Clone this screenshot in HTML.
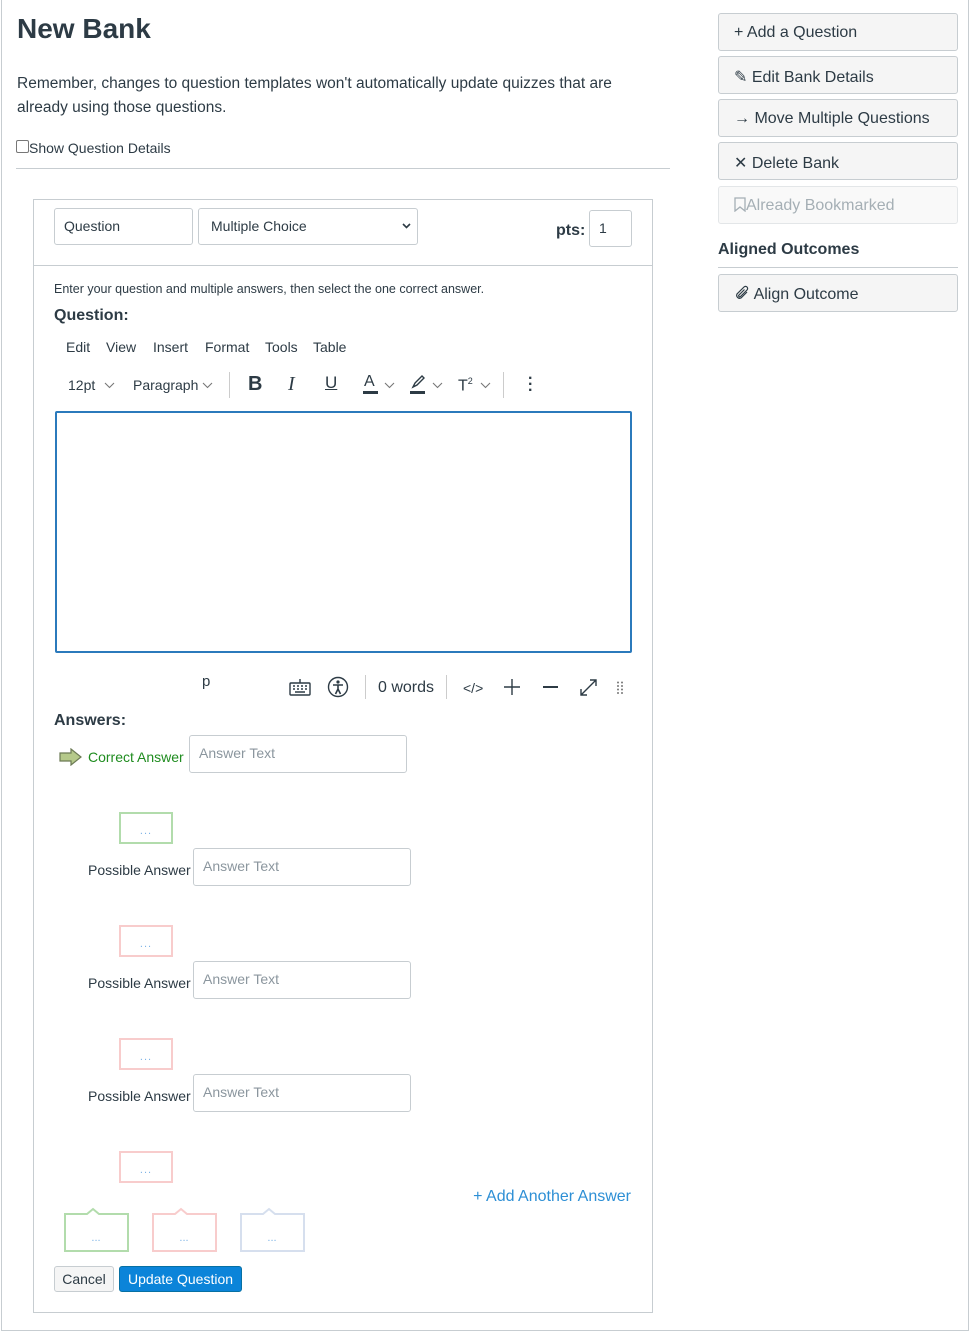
<!DOCTYPE html>
<html><head><meta charset="utf-8"><style>
*{box-sizing:border-box}
body{margin:0;width:971px;height:1333px;background:#fff;font-family:"Liberation Sans",sans-serif;color:#2d3b45;position:relative;overflow:hidden}
.a{position:absolute;white-space:nowrap}
.frame{position:absolute;left:1px;top:0;width:968px;height:1331px;border:1px solid #c7cdd1;border-top:none}
.btn{position:absolute;left:718px;width:240px;height:38px;background:#f5f5f5;border:1px solid #c7cdd1;border-radius:3px;font-size:16px;padding:10px 0 0 15px;color:#2d3b45}
.inp{position:absolute;border:1px solid #c7cdd1;border-radius:3px;background:#fff;font-size:14px;padding:9px 9px;color:#2d3b45}
.ph{color:#8b969e}
.cb{position:absolute;width:54px;height:32px;border:2px solid;font-size:11px;color:#7fb4e6;text-align:center;line-height:34px;letter-spacing:1px}
.ic{stroke:#2d3b45;fill:none;stroke-width:1.4}
.chev{position:absolute}
</style></head><body>
<div class="frame"></div>
<div class="a" style="left:17px;top:13px;font-size:28px;font-weight:bold;color:#2d3b45">New Bank</div>
<div class="a" style="left:17px;top:72px;font-size:15.5px;line-height:24px;white-space:normal;width:640px">Remember, changes to question templates won't automatically update quizzes that are already using those questions.</div>
<div class="a" style="left:16px;top:140px;width:13px;height:13px;border:1px solid #777;border-radius:2px;background:#fff"></div>
<div class="a" style="left:29px;top:140px;font-size:14px">Show Question Details</div>
<div class="a" style="left:16px;top:168px;width:654px;height:1px;background:#c7cdd1"></div>

<!-- question box -->
<div class="a" style="left:33px;top:199px;width:620px;height:1114px;border:1px solid #c7cdd1"></div>
<div class="a" style="left:34px;top:200px;width:618px;height:66px;background:#fff;border-bottom:1px solid #c7cdd1"></div>
<div class="inp" style="left:54px;top:208px;width:139px;height:37px">Question</div>
<div class="inp" style="left:198px;top:208px;width:220px;height:37px;padding-left:12px">Multiple Choice
<svg style="position:absolute;right:6px;top:14px" width="9" height="6"><path d="M1 1l3.5 3.5L8 1" stroke="#2d3b45" stroke-width="1.6" fill="none"/></svg></div>
<div class="a" style="left:556px;top:222px;font-size:16px;font-weight:bold">pts:</div>
<div class="inp" style="left:589px;top:210px;width:43px;height:37px">1</div>

<div class="a" style="left:54px;top:282px;font-size:12.5px">Enter your question and multiple answers, then select the one correct answer.</div>
<div class="a" style="left:54px;top:307px;font-size:16px;font-weight:bold">Question:</div>
<div class="a" style="left:66px;top:339px;font-size:14px">Edit</div>
<div class="a" style="left:106px;top:339px;font-size:14px">View</div>
<div class="a" style="left:153px;top:339px;font-size:14px">Insert</div>
<div class="a" style="left:205px;top:339px;font-size:14px">Format</div>
<div class="a" style="left:265px;top:339px;font-size:14px">Tools</div>
<div class="a" style="left:313px;top:339px;font-size:14px">Table</div>

<div class="a" style="left:68px;top:377px;font-size:14px">12pt</div>
<svg class="chev" style="left:104px;top:382px" width="11" height="7"><path d="M1 1l4.5 4.5L10 1" stroke="#777" stroke-width="1.1" fill="none"/></svg>
<div class="a" style="left:133px;top:377px;font-size:14px">Paragraph</div>
<svg class="chev" style="left:202px;top:382px" width="11" height="7"><path d="M1 1l4.5 4.5L10 1" stroke="#777" stroke-width="1.1" fill="none"/></svg>
<div class="a" style="left:229px;top:372px;width:1px;height:26px;background:#ccc"></div>
<div class="a" style="left:248px;top:373px;font-size:20px;font-weight:bold">B</div>
<div class="a" style="left:288px;top:373px;font-size:20px;font-style:italic;font-family:'Liberation Serif',serif">I</div>
<div class="a" style="left:325px;top:373px;font-size:17px;text-decoration:underline">U</div>
<div class="a" style="left:364px;top:373px;font-size:16px">A</div>
<div class="a" style="left:363px;top:391px;width:15px;height:3px;background:#2d3b45"></div>
<svg class="chev" style="left:384px;top:382px" width="11" height="7"><path d="M1 1l4.5 4.5L10 1" stroke="#777" stroke-width="1.1" fill="none"/></svg>
<svg class="a" style="left:411px;top:375px" width="16" height="14"><path class="ic" d="M2 12 L4 8 L11 1 L13 3 L6 10 Z"/></svg>
<div class="a" style="left:410px;top:391px;width:15px;height:3px;background:#2d3b45"></div>
<svg class="chev" style="left:432px;top:382px" width="11" height="7"><path d="M1 1l4.5 4.5L10 1" stroke="#777" stroke-width="1.1" fill="none"/></svg>
<div class="a" style="left:458px;top:376px;font-size:16px">T<sup style="font-size:9px">2</sup></div>
<svg class="chev" style="left:480px;top:382px" width="11" height="7"><path d="M1 1l4.5 4.5L10 1" stroke="#777" stroke-width="1.1" fill="none"/></svg>
<div class="a" style="left:503px;top:372px;width:1px;height:26px;background:#ccc"></div>
<div class="a" style="left:528px;top:376px;font-size:16px;font-weight:bold;line-height:6px">·<br>·<br>·</div>

<div class="a" style="left:55px;top:411px;width:577px;height:242px;border:2px solid #2b7abc;border-radius:2px"></div>

<div class="a" style="left:202px;top:673px;font-size:15px">p</div>
<svg class="a" style="left:289px;top:678px" width="22" height="18"><rect class="ic" x="1" y="5" width="20" height="12" rx="1"/><path class="ic" d="M11 5 V1"/><path d="M4 8h2M8 8h2M12 8h2M16 8h2M4 11h2M8 11h2M12 11h2M16 11h2M6 14h10" stroke="#2d3b45" stroke-width="1.5"/></svg>
<svg class="a" style="left:327px;top:676px" width="22" height="22"><circle class="ic" cx="11" cy="11" r="9.5"/><circle cx="11" cy="6" r="1.6" fill="#2d3b45"/><path d="M6 9h10M11 9v4l-2.5 5M11 13l2.5 5" stroke="#2d3b45" stroke-width="1.6" fill="none"/></svg>
<div class="a" style="left:365px;top:675px;width:1px;height:24px;background:#ccc"></div>
<div class="a" style="left:378px;top:679px;font-size:16px">0 words</div>
<div class="a" style="left:446px;top:675px;width:1px;height:24px;background:#ccc"></div>
<div class="a" style="left:463px;top:680px;font-size:14px">&lt;/&gt;</div>
<svg class="a" style="left:504px;top:679px" width="16" height="16"><path d="M8 0v16M0 8h16" stroke="#2d3b45" stroke-width="1.4"/></svg>
<div class="a" style="left:543px;top:686px;width:15px;height:2px;background:#2d3b45"></div>
<svg class="a" style="left:580px;top:679px" width="17" height="17"><path class="ic" d="M1 16 L16 1 M10 1h6v6 M1 10v6h6"/></svg>
<svg class="a" style="left:616px;top:681px" width="8" height="14"><g fill="#777"><circle cx="2" cy="1.5" r="1"/><circle cx="6" cy="1.5" r="1"/><circle cx="2" cy="5" r="1"/><circle cx="6" cy="5" r="1"/><circle cx="2" cy="8.5" r="1"/><circle cx="6" cy="8.5" r="1"/><circle cx="2" cy="12" r="1"/><circle cx="6" cy="12" r="1"/></g></svg>

<div class="a" style="left:54px;top:712px;font-size:16px;font-weight:bold">Answers:</div>

<svg class="a" style="left:59px;top:748px" width="24" height="18"><path d="M1 5 H12 V1 L22 9 L12 17 V13 H1 Z" fill="#b5c98a" stroke="#6c7a55" stroke-width="1.2"/></svg>
<div class="a" style="left:88px;top:749px;font-size:14px;color:#1f8c1f">Correct Answer</div>
<div class="inp ph" style="left:189px;top:735px;width:218px;height:38px">Answer Text</div>

<div class="cb" style="left:119px;top:812px;border-color:#b2dcac">...</div>
<div class="a" style="left:88px;top:862px;font-size:14px">Possible Answer</div>
<div class="inp ph" style="left:193px;top:848px;width:218px;height:38px">Answer Text</div>

<div class="cb" style="left:119px;top:925px;border-color:#f8cccc">...</div>
<div class="a" style="left:88px;top:975px;font-size:14px">Possible Answer</div>
<div class="inp ph" style="left:193px;top:961px;width:218px;height:38px">Answer Text</div>

<div class="cb" style="left:119px;top:1038px;border-color:#f8cccc">...</div>
<div class="a" style="left:88px;top:1088px;font-size:14px">Possible Answer</div>
<div class="inp ph" style="left:193px;top:1074px;width:218px;height:38px">Answer Text</div>

<div class="cb" style="left:119px;top:1151px;border-color:#f8cccc">...</div>

<div class="a" style="right:340px;top:1188px;font-size:16px;color:#2d8fd5">+ Add Another Answer</div>

<svg class="a" style="left:64px;top:1207px" width="66" height="46"><path d="M1 7 H23 L29 2 L35 7 H64 V44 H1 Z" fill="#fff" stroke="#b2dcac" stroke-width="2"/><text x="32" y="34" font-size="11" fill="#7fb4e6" text-anchor="middle" font-family="Liberation Sans">...</text></svg>
<svg class="a" style="left:152px;top:1207px" width="66" height="46"><path d="M1 7 H23 L29 2 L35 7 H64 V44 H1 Z" fill="#fff" stroke="#f8cccc" stroke-width="2"/><text x="32" y="34" font-size="11" fill="#7fb4e6" text-anchor="middle" font-family="Liberation Sans">...</text></svg>
<svg class="a" style="left:240px;top:1207px" width="66" height="46"><path d="M1 7 H23 L29 2 L35 7 H64 V44 H1 Z" fill="#fff" stroke="#d6dfee" stroke-width="2"/><text x="32" y="34" font-size="11" fill="#7fb4e6" text-anchor="middle" font-family="Liberation Sans">...</text></svg>

<div class="a" style="left:54px;top:1266px;width:60px;height:26px;background:#f5f5f5;border:1px solid #c7cdd1;border-radius:3px;font-size:14px;text-align:center;line-height:24px">Cancel</div>
<div class="a" style="left:119px;top:1266px;width:123px;height:26px;background:#0b84d9;border:1px solid #0770a3;border-radius:3px;font-size:14px;text-align:center;line-height:24px;color:#fff">Update Question</div>

<!-- sidebar -->
<div class="btn" style="top:13px">+ Add a Question</div>
<div class="btn" style="top:56px">&#9998; Edit Bank Details</div>
<div class="btn" style="top:99px">&#8594; Move Multiple Questions</div>
<div class="btn" style="top:142px">&#10005; Delete Bank</div>
<div class="btn" style="top:186px;color:#a5afb5;background:#f9f9f9;border-color:#e3e6e8">
<svg style="vertical-align:-2px" width="12" height="15"><path d="M1 1h10v13l-5-4-5 4z" fill="none" stroke="#a5afb5" stroke-width="1.3"/></svg>Already Bookmarked</div>
<div class="a" style="left:718px;top:241px;font-size:16px;font-weight:bold">Aligned Outcomes</div>
<div class="a" style="left:718px;top:267px;width:240px;height:1px;background:#c7cdd1"></div>
<div class="btn" style="top:274px"><svg style="vertical-align:-2px" width="16" height="16"><path d="M13 7 L7 13 A3 3 0 0 1 3 9 L10 2 A2 2 0 0 1 13 5 L6.5 11.5 A1 1 0 0 1 5 10 L10.5 4.5" fill="none" stroke="#2d3b45" stroke-width="1.2"/></svg> Align Outcome</div>
</body></html>
